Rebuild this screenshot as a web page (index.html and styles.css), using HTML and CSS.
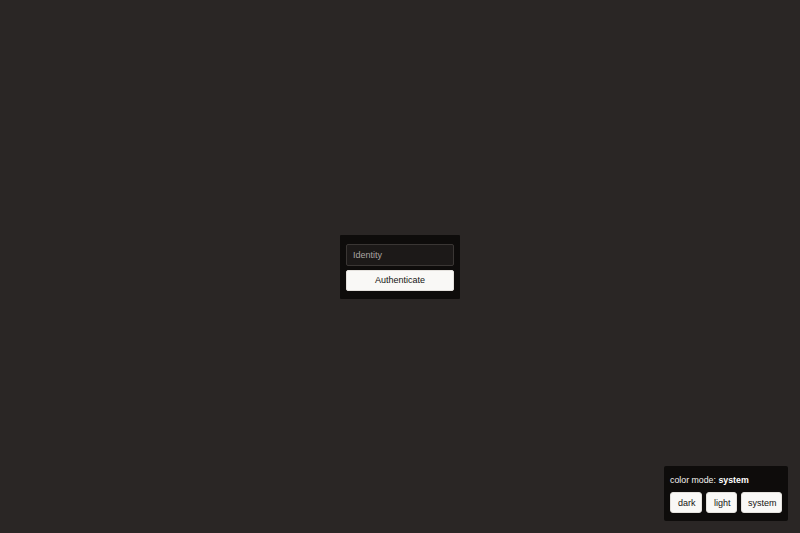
FILE: index.html
```html
<!DOCTYPE html>
<html lang="en">
<head>
<meta charset="utf-8">
<title>Authenticate</title>
<link rel="stylesheet" href="styles.css">
</head>
<body>
<main class="stage">
  <form class="auth-card">
    <input class="identity" type="text" placeholder="Identity">
    <button class="auth-btn" type="button">Authenticate</button>
  </form>
</main>
<aside class="mode-panel">
  <div class="mode-label">color mode: <b>system</b></div>
  <div class="mode-buttons">
    <button class="mode-btn" type="button">dark</button>
    <button class="mode-btn" type="button">light</button>
    <button class="mode-btn" type="button">system</button>
  </div>
</aside>
</body>
</html>
```
FILE: styles.css
```css
html, body {
  margin: 0;
  padding: 0;
  height: 100%;
}
body {
  background: #2a2625;
  color: #ece9e6;
  font-family: "Liberation Sans", Arial, Helvetica, sans-serif;
  font-size: 8.8px;
}
.stage {
  height: 100vh;
  display: flex;
  align-items: center;
  justify-content: center;
}
.auth-card {
  background: #0e0c0b;
  width: 120px;
  box-sizing: border-box;
  padding: 9px 6px 8px;
  display: flex;
  flex-direction: column;
  gap: 4px;
  border-radius: 1px;
}
.identity {
  box-sizing: border-box;
  height: 22px;
  width: 100%;
  margin: 0;
  background: #1c1918;
  border: 1px solid #3a3634;
  border-radius: 2px;
  padding: 0 6px;
  font-family: inherit;
  font-size: 9px;
  color: #ece9e6;
  outline: none;
}
.identity::placeholder {
  color: #aaa5a1;
  opacity: 1;
}
.auth-btn {
  box-sizing: border-box;
  height: 21px;
  width: 100%;
  margin: 0;
  background: #f9f8f6;
  border: 1px solid #e4e1dd;
  border-radius: 2px;
  font-family: inherit;
  font-size: 9px;
  color: #141211;
  padding: 0;
}
.mode-panel {
  position: fixed;
  right: 12px;
  bottom: 12px;
  width: 124px;
  box-sizing: border-box;
  background: #0e0c0b;
  padding: 8px 6px 8px;
  border-radius: 2px;
}
.mode-label {
  line-height: 12px;
  margin-bottom: 6px;
  white-space: nowrap;
  color: #f5f3f1;
}
.mode-label b {
  font-weight: 700;
  color: #ffffff;
}
.mode-buttons {
  display: flex;
  gap: 4px;
}
.mode-btn {
  box-sizing: border-box;
  height: 21px;
  margin: 0;
  padding: 0 7px;
  background: #f9f8f6;
  border: 1px solid #e4e1dd;
  border-radius: 3px;
  font-family: inherit;
  font-size: 9px;
  color: #141211;
}
.mode-btn:nth-child(1) { width: 32px; }
.mode-btn:nth-child(2) { width: 31px; }
.mode-btn:nth-child(3) { width: 41px; padding: 0 6px; }
```
